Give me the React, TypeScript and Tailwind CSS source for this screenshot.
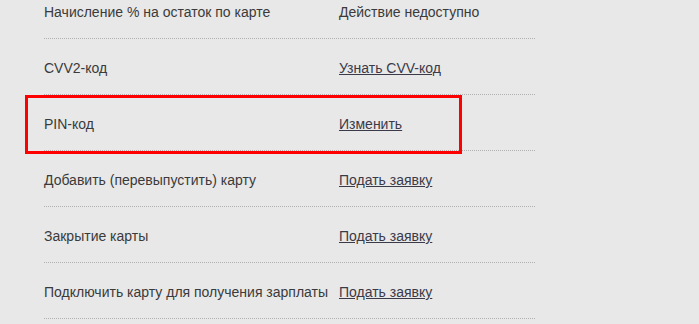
const rows: { label: string; action: string; link: boolean }[] = [
  { label: "Начисление % на остаток по карте", action: "Действие недоступно", link: false },
  { label: "CVV2-код", action: "Узнать CVV-код", link: true },
  { label: "PIN-код", action: "Изменить", link: true },
  { label: "Добавить (перевыпустить) карту", action: "Подать заявку", link: true },
  { label: "Закрытие карты", action: "Подать заявку", link: true },
  { label: "Подключить карту для получения зарплаты", action: "Подать заявку", link: true },
];

export default function App() {
  return (
    <div
      className="relative w-[699px] h-[324px] overflow-hidden bg-[#e8e8e8] text-[14px] text-[#3a3a3a]"
      style={{ fontFamily: '"Liberation Sans", Arial, sans-serif' }}
    >
      <div className="ml-[44px] w-[491px] -mt-[17px]">
        {rows.map((r, i) => (
          <div key={i} className="flex items-center h-[56px] pt-[4px] border-b border-dotted border-[#b0b0b0]">
            <div className="w-[295px] shrink-0">{r.label}</div>
            {r.link ? (
              <a href="#" className="underline text-[#3a3a48]">
                {r.action}
              </a>
            ) : (
              <span>{r.action}</span>
            )}
          </div>
        ))}
      </div>
      <div className="absolute left-[25px] top-[95px] w-[437px] h-[59px] border-[3px] border-[#ff0000]" />
    </div>
  );
}
